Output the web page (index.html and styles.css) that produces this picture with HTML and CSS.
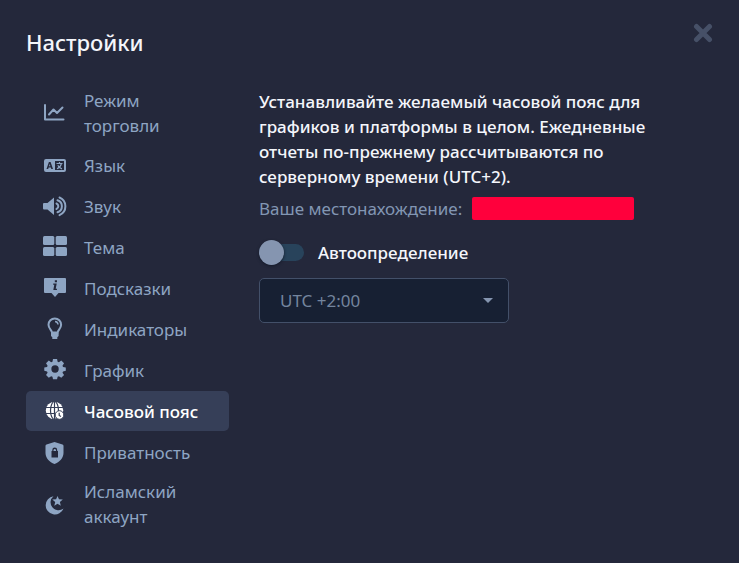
FILE: index.html
```html
<!DOCTYPE html>
<html lang="ru">
<head>
<meta charset="utf-8">
<meta name="viewport" content="width=device-width, initial-scale=1">
<title>Настройки</title>
<link rel="stylesheet" href="styles.css">
</head>
<body>
<main class="settings">
  <header class="settings-header">
    <h1 class="title">Настройки</h1>
    <button class="close" type="button" aria-label="Закрыть">
      <svg width="20" height="20" viewBox="0 0 20 20" fill="none" stroke="currentColor" stroke-width="5" stroke-linecap="round"><path d="M3.500 3.500l13 13M16.500 3.500l-13 13"/></svg>
    </button>
  </header>
  <div class="settings-body">
    <nav class="menu">
      <a class="item" href="#mode">
        <svg class="icon" viewBox="0 0 24 24" fill="none" stroke="currentColor" stroke-width="2" stroke-linecap="round" stroke-linejoin="round"><path d="M2 4v14.500H20.500"/><path d="M6 13.500l4.500-5 3.500 3.500 5.500-5.500"/></svg>
        <span>Режим торговли</span>
      </a>
      <a class="item" href="#language">
        <svg class="icon" viewBox="0 0 24 24" fill="currentColor"><path fill-rule="evenodd" d="M3 6h18a2 2 0 0 1 2 2v9a2 2 0 0 1-2 2H3a2 2 0 0 1-2-2V8a2 2 0 0 1 2-2zM12 8v9h9V8zM5.900 9L3.500 16h1.700l.4-1.400h2.300l.4 1.400H10L7.600 9zM6.700 10.900l.7 2.400H6z"/><path d="M13.500 10.500h6M16.500 9v1.500M18.300 10.800c-.5 2.200-2 4-4.300 5M14.800 12.200c.8 1.600 2.200 3 4.200 3.700" fill="none" stroke="currentColor" stroke-width="1.200"/></svg>
        <span>Язык</span>
      </a>
      <a class="item" href="#sound">
        <svg class="icon" viewBox="0 0 24 24" fill="currentColor"><path d="M1 9h3.500L11 3.500V21l-6.500-5.500H1a1 1 0 0 1-1-1V10a1 1 0 0 1 1-1z"/><path d="M13.500 9.500a3 3 0 0 1 0 5.500M14.500 6.300a6.300 6.300 0 0 1 0 12M16.500 3.500a9.600 9.600 0 0 1 0 17.700" fill="none" stroke="currentColor" stroke-width="2" stroke-linecap="round"/></svg>
        <span>Звук</span>
      </a>
      <a class="item" href="#theme">
        <svg class="icon" viewBox="0 0 24 24" fill="currentColor"><rect x="0" y="1" width="11.300" height="9" rx="1.500"/><rect x="12.700" y="1" width="11.300" height="9" rx="1.500"/><rect x="0" y="12" width="11.300" height="9" rx="1.500"/><rect x="12.700" y="12" width="11.300" height="9" rx="1.500"/></svg>
        <span>Тема</span>
      </a>
      <a class="item" href="#tips">
        <svg class="icon" viewBox="0 0 24 24" fill="currentColor"><path fill-rule="evenodd" d="M2 2h20a1 1 0 0 1 1 1v13a1 1 0 0 1-1 1h-6.500L12 21l-3.500-4H2a1 1 0 0 1-1-1V3a1 1 0 0 1 1-1zM11.800 4.200v2h2.200v-2zM10.300 7.500l-.2 1.200h1.200l-1 5.300h3.500l.3-1.200h-1.400l1-5.300z"/></svg>
        <span>Подсказки</span>
      </a>
      <a class="item" href="#indicators">
        <svg class="icon" viewBox="0 0 24 24" fill="none" stroke="currentColor" stroke-width="2"><path d="M9 15.500c-.3-2.500-3.500-4-3.500-7.800a6.300 6.300 0 0 1 12.600 0c0 3.800-3.200 5.300-3.500 7.800z"/><path d="M12 4.500a3.200 3.200 0 0 1 3 3" stroke-width="1.500"/><path d="M8 15.500h7.600V19l-1.300 1.300V22h-5v-1.700L8 19z" fill="currentColor" stroke="none"/></svg>
        <span>Индикаторы</span>
      </a>
      <a class="item" href="#chart">
        <svg class="icon" viewBox="0 0 24 24" fill="currentColor"><path fill-rule="evenodd" d="M9.800 1h4.400l.6 3 1.400.6 2.600-1.800 3 3-1.700 2.600.6 1.400 3 .6v3.400l-3 .8-.6 1.500 1.700 2.500-3 3-2.600-1.700-1.400.6-.6 2.500H9.800l-.6-2.500-1.400-.6-2.600 1.700-3-3 1.700-2.500-.6-1.500-3-.8v-3.400l3-.6.6-1.400-1.700-2.600 3-3 2.600 1.800 1.400-.6zM12 8a4 4 0 1 0 0 8 4 4 0 0 0 0-8z" transform="translate(1 0) scale(.92)"/></svg>
        <span>График</span>
      </a>
      <a class="item active" href="#timezone" aria-current="page">
        <svg class="icon" viewBox="0 0 24 24" fill="currentColor"><circle cx="11.500" cy="11.500" r="8.700"/><g fill="none" stroke="#363f58" stroke-width="1.200"><ellipse cx="11.500" cy="11.500" rx="4" ry="9"/><path d="M2.500 8.500h18M2.500 14.500h10M11.500 2v19"/></g><circle cx="16.500" cy="16" r="4.300" stroke="#363f58" stroke-width="1"/><path d="M16.200 13.700v2.700l1.800 1" fill="none" stroke="#363f58" stroke-width="1.200"/></svg>
        <span>Часовой пояс</span>
      </a>
      <a class="item" href="#privacy">
        <svg class="icon" viewBox="0 0 24 24" fill="currentColor"><path fill-rule="evenodd" d="M11.500 2l8 2.500c.7.200 1 .7 1 1.500v7c0 5-4 9-9 11-5-2-9-6-9-11V6c0-.8.300-1.300 1-1.500zM9.300 11H8.500v6.500h6.500V11h-.8v-1a2.450 2.450 0 0 0-4.900 0zM10.500 11v-1a1.300 1.300 0 0 1 2.500 0v1z"/></svg>
        <span>Приватность</span>
      </a>
      <a class="item" href="#islamic">
        <svg class="icon" viewBox="0 0 24 24" fill="currentColor"><path d="M10.500 4.200a9.200 9.200 0 1 0 10 12.300 7.100 7.100 0 0 1-10-12.300z"/><path d="M14.500 4l1.500 3.300 3.800.3-2.900 2.500.9 3.700-3.300-2-3.200 2 .9-3.700-2.900-2.500 3.800-.3z"/></svg>
        <span>Исламский аккаунт</span>
      </a>
    </nav>
    <section class="panel">
      <p class="description">Устанавливайте желаемый часовой пояс для графиков и платформы в целом. Ежедневные отчеты по-прежнему рассчитываются по серверному времени (UTC+2).</p>
      <p class="location">Ваше местонахождение: <span class="redacted"></span></p>
      <label class="auto">
        <input class="toggle" type="checkbox" role="switch">
        <span>Автоопределение</span>
      </label>
      <div class="zone">
        <select class="zone-select" aria-label="Часовой пояс"><option>UTC +2:00</option></select>
        <svg class="caret" width="10" height="5" viewBox="0 0 10 5" fill="currentColor" aria-hidden="true"><path d="M0 0h10L5 5z"/></svg>
      </div>
    </section>
  </div>
</main>
</body>
</html>
```
FILE: styles.css
```css
* {
  box-sizing: border-box;
}

body {
  margin: 0;
  min-height: 100vh;
  background: #24283b;
  color: #f4f6fb;
  font: 400 17px/25px "Noto Sans", sans-serif;
}

.settings {
  padding: 23px 26px;
}

.settings-header {
  display: flex;
  justify-content: space-between;
  align-items: flex-start;
}

.title {
  margin: 0;
  padding: 3px 0 1px;
  font-size: 22px;
  line-height: 32px;
  font-weight: 500;
}

.close {
  display: flex;
  padding: 0;
  border: 0;
  background: none;
  color: #465067;
}

.settings-body {
  display: grid;
  grid-template-columns: 203px minmax(0, 400px);
  gap: 30px;
  padding-top: 23px;
}

.menu {
  display: flex;
  flex-direction: column;
  gap: 1px;
}

.item {
  display: flex;
  align-items: center;
  gap: 17px;
  min-height: 40px;
  padding: 6px 17px;
  border-radius: 5px;
  color: #8ea5c3;
  text-decoration: none;
}

.active {
  background: #363f58;
  color: #ffffff;
  font-weight: 500;
}

.icon {
  flex: none;
  width: 24px;
  height: 24px;
}

.panel {
  padding-top: 7px;
}

.description,
.location {
  margin: 0;
}

.description {
  font-weight: 500;
}

.location {
  display: flex;
  align-items: center;
  gap: 10px;
  padding-top: 7px;
  color: #8296b3;
}

.redacted {
  width: 162px;
  height: 23px;
  border-radius: 2px;
  background: #ff003c;
}

.auto {
  display: flex;
  align-items: center;
  gap: 14px;
  padding-top: 19px;
  font-weight: 500;
}

.toggle {
  appearance: none;
  display: flex;
  align-items: center;
  width: 45px;
  height: 17px;
  margin: 0;
  border-radius: 9px;
  background: #28435b;
}

.toggle::before {
  content: "";
  width: 25px;
  height: 25px;
  border-radius: 50%;
  background: #8595b0;
  box-shadow: 0 1px 3px #141a2a;
}

.toggle:checked {
  justify-content: flex-end;
}

.zone {
  display: grid;
  align-items: center;
  max-width: 250px;
  padding-top: 13px;
}

.zone-select,
.caret {
  grid-area: 1 / 1;
}

.zone-select {
  appearance: none;
  width: 100%;
  height: 45px;
  padding: 0 20px;
  border: 1px solid #435069;
  border-radius: 5px;
  background: #172033;
  color: #74859e;
  font: inherit;
}

.caret {
  justify-self: end;
  margin-right: 16px;
  color: #8595b0;
  pointer-events: none;
}
```
